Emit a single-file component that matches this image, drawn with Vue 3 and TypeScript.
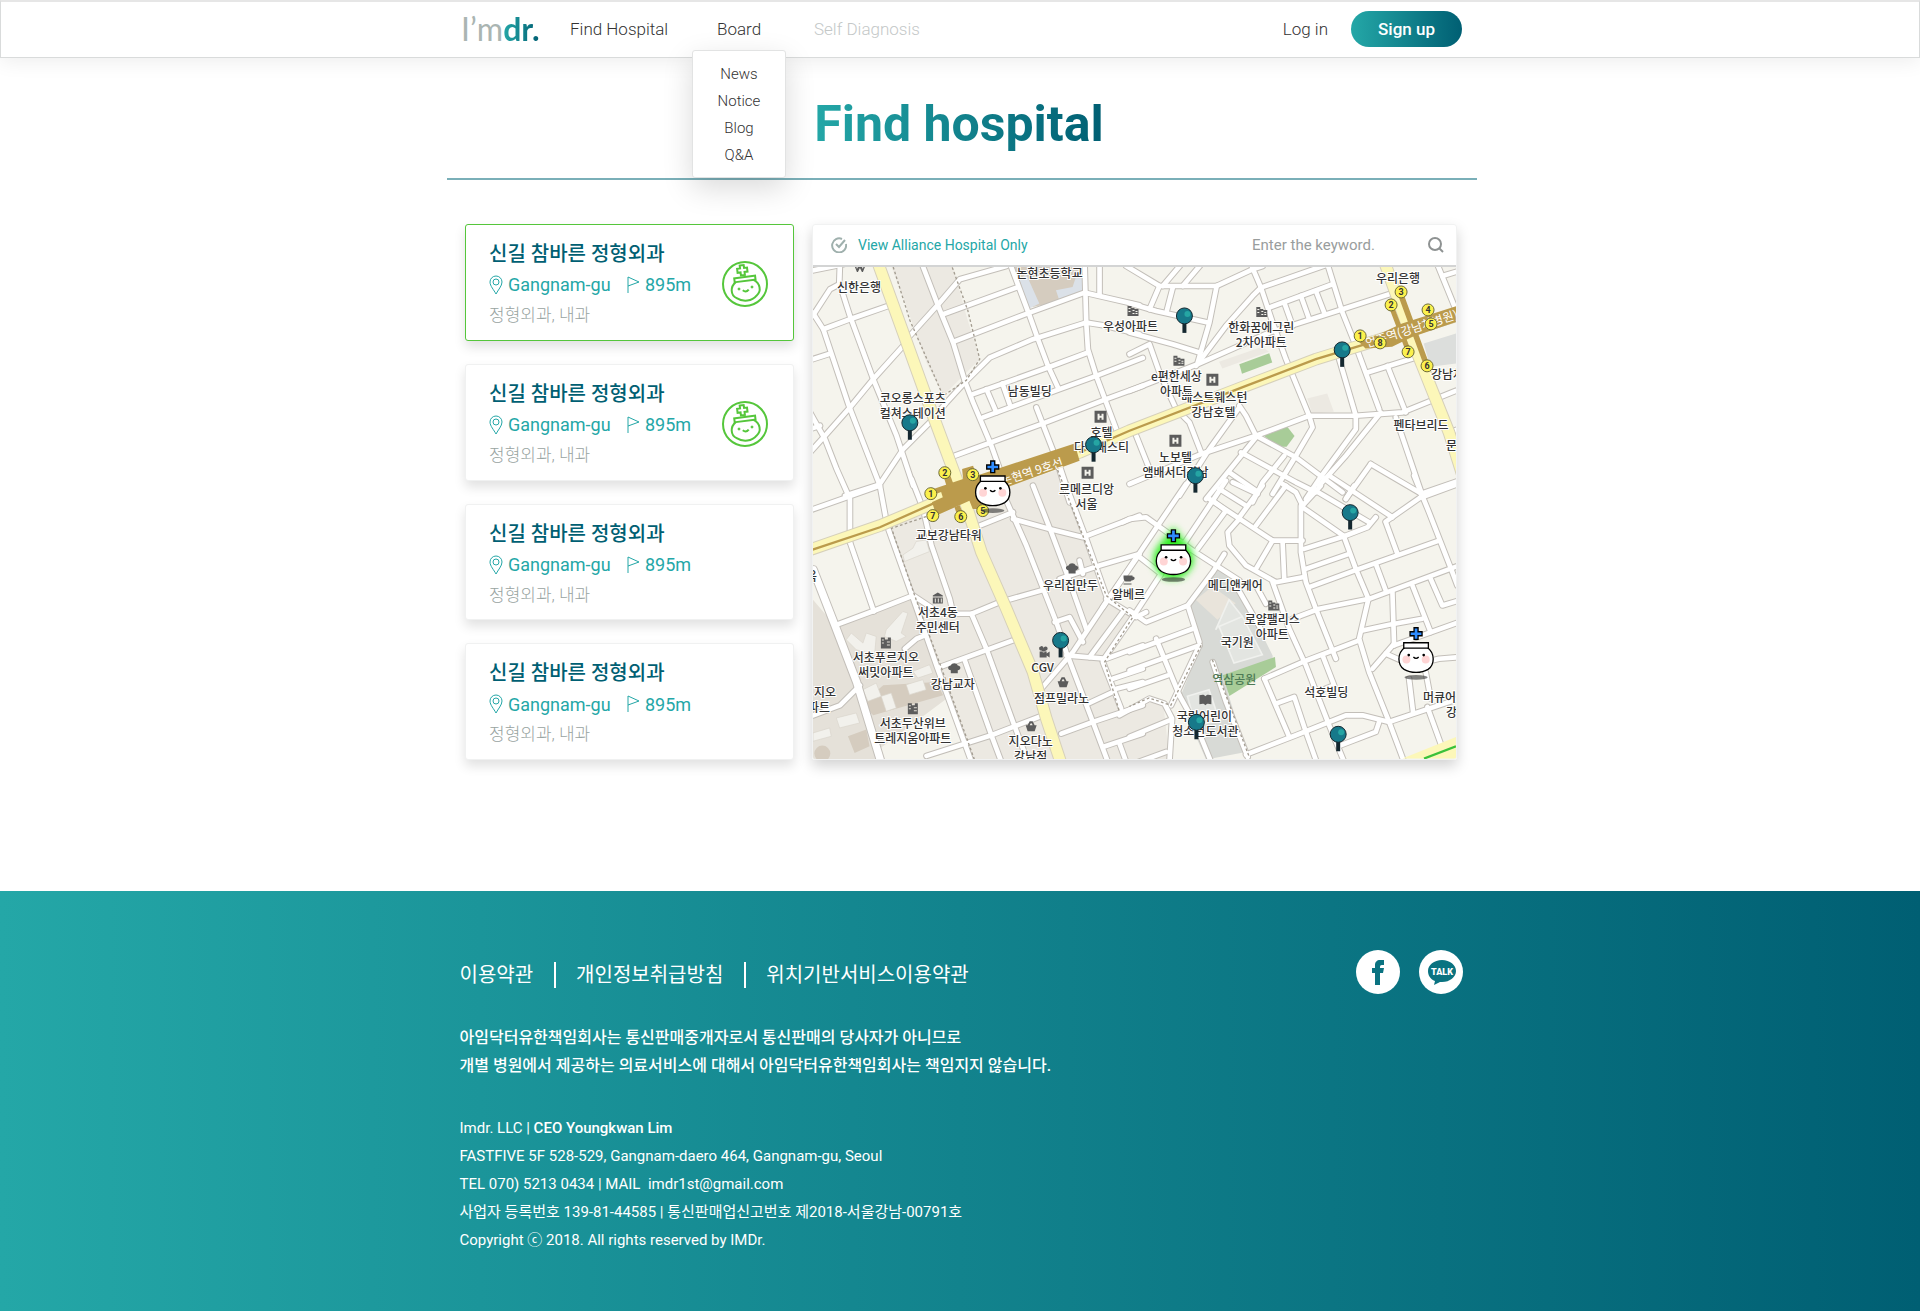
<script setup lang="ts">
import { ref } from 'vue'

interface Hospital { id: number; name: string; area: string; distance: string; depts: string; alliance: boolean; active: boolean }
interface Sheet { x: number; y: number; paths: string[] }
interface Label { x: number; y: number; text: string; anchor?: 'start' | 'end'; park?: boolean }
interface Spot { x: number; y: number }

const keyword = ref('')
const allianceOnly = ref(false)
const menu = ['News', 'Notice', 'Blog', 'Q&A']

const hospitals: Hospital[] = [1, 2, 3, 4].map((id) => ({
  id,
  name: '신길 참바른 정형외과',
  area: 'Gangnam-gu',
  distance: '895m',
  depts: '정형외과, 내과',
  alliance: id < 3,
  active: id === 1,
}))

// The street network is kept in four map sheets, each with its own origin.
const sheets: Sheet[] = [
  { x: -39, y: -153, paths: [
    'M120 140L118 200L150 300L220 490L290 660L340 810',
    'M38 290L70 340L145 565L240 810L262 930',
    'M30 165L130 145', 'M38 300L90 220L118 205', 'M70 340L150 310L265 270', 'M38 430L85 415',
    'M30 710L75 660L150 575L220 490L310 390', 'M330 360L420 260L480 190L620 150',
    'M30 590L75 670L110 760L150 850L150 980', 'M240 805L310 700L390 620L440 560L495 500L570 425L700 370L860 320L910 328L1020 355',
    'M365 140L415 270L460 380L495 495L520 560L575 690L600 760', 'M630 140L690 300L715 370L745 450L775 515',
    'M430 295L650 215', 'M460 378L690 290L855 230L1020 268', 'M855 140L860 320L865 400L890 480L950 640',
    'M900 140L900 235', 'M520 535L745 455L865 410', 'M550 605L780 520L890 480L1030 426', 'M560 520L590 590', 'M608 503L630 565',
    'M465 720L725 625L920 550L1030 510', 'M710 575L770 730L810 860', 'M135 840L235 808', 'M30 640L60 630',
  ] },
  { x: 951, y: -153, paths: [
    'M0 262L80 285L235 320', 'M-10 150L90 210L262 210L370 160L400 150', 'M90 210L60 280', 'M130 215L112 285', 'M160 210L215 145', 'M100 210L155 145',
    'M262 210L240 320L205 440', 'M200 450L290 330L370 240L395 215L610 140', 'M365 145L395 215L430 320L470 430L540 600L550 635L500 720L430 835',
    'M0 525L205 445L420 350L640 280L780 235', 'M595 145L640 290L680 390L750 580', 'M420 275L610 205', 'M465 260L490 330', 'M515 240L540 310', 'M560 225L585 290',
    'M0 350L130 385L210 410', 'M0 415L60 385L90 470L140 580L180 620L215 710', 'M20 660L60 760', 'M0 805L215 715L380 660L540 600L680 600L820 590L980 525',
    'M330 570L350 600L380 660L500 725L640 830', 'M330 575L240 700L150 840', 'M380 665L230 850', 'M715 470L860 425', 'M775 450L830 590', 'M800 605L880 840',
    'M630 430L680 600L680 640L570 790L530 850', 'M755 590L650 720L570 810', 'M725 745L650 850', 'M725 745L870 830', 'M335 710L500 800L560 830',
    'M465 720L400 800L370 860', 'M300 770L380 825', 'M875 835L990 795', 'M925 145L980 280', 'M940 180L990 165', 'M960 650L990 640',
  ] },
  { x: -39, y: 657, paths: [
    'M35 72L240 0', 'M150 170L222 378', 'M105 420L225 375L340 330L400 370', 'M260 115L335 325L410 540L515 830',
    'M335 -20L370 70L395 180L450 340L460 385L515 385L600 350L725 315', 'M515 385L560 490L640 710L685 830', 'M420 545L640 465', 'M495 525L575 750L605 830',
    'M380 812L575 750L730 690', 'M540 120L640 80', 'M600 0L680 180L770 410L800 500L880 710L925 830', 'M640 100L750 130L850 155L1020 90',
    'M700 0L755 140L800 260L860 430', 'M780 -60L800 0L860 160L920 330', 'M780 280L900 240L1020 205', 'M765 410L810 395L850 470', 'M840 225L850 265',
    'M725 610L820 500L920 350L1020 205', 'M800 510L920 520L1030 480', 'M870 515L970 380', 'M910 525L1000 395', 'M920 340L1010 395L1040 380',
    'M910 530L965 670', 'M785 745L880 710L1030 660', 'M865 655L940 620', 'M940 580L1030 550', 'M950 610L1030 590', 'M910 785L1030 745', 'M960 775L980 830',
    'M315 490L350 460L375 450', 'M40 690L120 660L180 600',
  ] },
  { x: 951, y: 657, paths: [
    'M-20 110L0 100L50 95L85 120L190 195L260 240L330 285', 'M170 -5L85 120L25 210L-80 365', 'M290 -15L160 180', 'M25 210L95 265L10 395', 'M205 190L290 75L250 45',
    'M240 40L430 165L520 165', 'M430 165L380 250', 'M460 170L465 280', 'M330 100L295 140L300 180L350 240L440 290L520 275', 'M380 120L470 0', 'M330 95L400 0',
    'M270 10L350 60', 'M310 -10L385 25', 'M515 60L515 200L530 290L560 370L620 520', 'M460 -5L500 20L520 60L575 0', 'M520 65L645 152L715 125L740 95',
    'M550 10L720 110', 'M600 -30L790 95', 'M770 108L870 38L1000 -10', 'M855 -30L900 80L970 260L985 300', 'M525 190L645 152', 'M530 250L660 205', 'M675 0L650 40',
    'M645 155L680 250L718 340L690 460L720 560L780 710L825 830', 'M540 305L690 250L930 165', 'M770 110L805 205', 'M740 235L770 315',
    'M490 400L570 370L720 340L990 240', 'M790 320L795 480', 'M700 435L780 418L880 400', 'M850 300L905 440', 'M905 280L940 360L990 345', 'M795 480L990 410',
    'M730 550L795 475', 'M770 505L850 540L930 520L990 515', 'M840 580L852 680', 'M890 560L905 640', 'M350 808L500 750L650 690L700 690L780 710L990 640',
    'M635 780L740 740L750 710', 'M895 665L935 775', 'M405 580L520 530L690 465', 'M405 580L480 755', 'M440 655L495 635L530 740L562 830', 'M430 290L480 430L530 540L600 720L645 830',
    'M580 510L615 600L590 610', 'M285 205L250 260L175 360L50 410L0 375', 'M175 360L210 470', 'M250 530L290 650L355 815', 'M320 300L400 440', 'M380 300L410 355',
    'M150 630L200 720L245 830', 'M0 500L190 430', 'M0 555L210 480', 'M80 460L150 630', 'M0 610L115 570', 'M210 480L125 660', 'M-30 690L60 640L105 655L128 700L120 830', 'M0 755L120 705', 'M0 840L110 800',
  ] },
]

const labels: Label[] = [
  { x: 46, y: 25, text: '신한은행' }, { x: 237, y: 11, text: '논현초등학교' }, { x: 318, y: 64, text: '우성아파트' },
  { x: 100, y: 136, text: '코오롱스포츠' }, { x: 100, y: 151, text: '컬쳐스테이션' }, { x: 217, y: 129, text: '남동빌딩' },
  { x: 289, y: 170, text: '호텔' }, { x: 289, y: 185, text: '다이내스티' }, { x: 274, y: 227, text: '르메르디앙' }, { x: 274, y: 242, text: '서울' },
  { x: 586, y: 16, text: '우리은행' }, { x: 449, y: 65, text: '한화꿈에그린' }, { x: 449, y: 80, text: '2차아파트' },
  { x: 402, y: 135, text: '베스트웨스턴' }, { x: 401, y: 150, text: '강남호텔' }, { x: 364, y: 114, text: 'e편한세상' }, { x: 364, y: 129, text: '아파트' },
  { x: 609, y: 163, text: '펜타브리드' }, { x: 634, y: 183, text: '문', anchor: 'start' }, { x: 363, y: 195, text: '노보텔' }, { x: 363, y: 210, text: '앰배서더강남' },
  { x: 619, y: 112, text: '강남차', anchor: 'start' }, { x: 136, y: 273, text: '교보강남타워' }, { x: 4, y: 315, text: '욱', anchor: 'end' },
  { x: 258, y: 324, text: '우리집만두' }, { x: 316, y: 333, text: '알베르' }, { x: 125, y: 351, text: '서초4동' }, { x: 125, y: 366, text: '주민센터' },
  { x: 73, y: 396, text: '서초푸르지오' }, { x: 73, y: 411, text: '써밋아파트' }, { x: 140, y: 423, text: '강남교자' }, { x: 230, y: 406, text: 'CGV' },
  { x: 249, y: 437, text: '점프밀라노' }, { x: 23, y: 431, text: '지오', anchor: 'end' }, { x: 17, y: 446, text: '파트', anchor: 'end' },
  { x: 100, y: 462, text: '서초두산위브' }, { x: 100, y: 477, text: '트레지움아파트' }, { x: 218, y: 480, text: '지오다노' }, { x: 218, y: 495, text: '강남점' },
  { x: 423, y: 324, text: '메디앤케어' }, { x: 460, y: 358, text: '로얄팰리스' }, { x: 460, y: 373, text: '아파트' }, { x: 425, y: 381, text: '국기원' },
  { x: 422, y: 418, text: '역삼공원', park: true }, { x: 392, y: 455, text: '국립어린이' }, { x: 393, y: 470, text: '청소년도서관' },
  { x: 514, y: 431, text: '석호빌딩' }, { x: 611, y: 436, text: '머큐어', anchor: 'start' }, { x: 634, y: 451, text: '강', anchor: 'start' },
]

// Glyph outlines for points of interest, drawn on a 12 × 12 grid.
const shapes: Record<string, string> = {
  building: 'M1 2H5V4H8V5H12V12H1ZM2 4V5H4V4ZM2 7V8H4V7ZM6 6V7H8V6ZM9 7V8H11V7ZM6 9V10H8V9ZM9 9V10H11V9Z',
  tower: 'M1 1H5V3H8V1H11V12H1ZM2 3V4H4V3ZM2 6V7H4V6ZM7 5V6H10V5ZM7 8V9H10V8Z',
  hotel: 'M0 0H12V12H0ZM3 3V9H5V7H7V9H9V3H7V5H5V3Z',
  museum: 'M6 1L11 4V5H1V4ZM1 6H11V12H1ZM3 7V11H4V7ZM6 7V11H7V7ZM9 7V11H10V7Z',
  chef: 'M3 11V8C-1 7 0 3 3 3C4 0 9 0 10 3C13 3 14 7 10 8V11Z',
  cup: 'M1 3H10V4C13 4 13 8 9 8L8 9H3C1 8 1 6 1 3ZM1 11H9V12H1Z',
  camera: 'M3 1A2 2 0 1 0 4 5A2 2 0 1 0 8 5A2 2 0 1 0 8 1A2 2 0 0 0 6 3A2 2 0 0 0 3 1ZM2 6H9V8L12 6V12L9 10V12H2Z',
  basket: 'M1 5H3L5 1H8L10 5H12L10 11H3ZM5 5H8L7 3H6Z',
  book: 'M0 2C3 1 5 1 6 3C7 1 9 1 12 2V11C9 10 7 10 6 12C5 10 3 10 0 11Z',
  won: 'M0 2H2L3 6L5 2H7L9 6L10 2H12V4H11L9 9H8L6 5L4 9H3L1 4H0Z',
}
const places: (Spot & { kind: string })[] = [
  { x: 320, y: 43, kind: 'building' }, { x: 449, y: 44, kind: 'building' }, { x: 366, y: 93, kind: 'building' }, { x: 461, y: 338, kind: 'building' },
  { x: 73, y: 376, kind: 'tower' }, { x: 100, y: 442, kind: 'tower' }, { x: 288, y: 150, kind: 'hotel' }, { x: 275, y: 206, kind: 'hotel' },
  { x: 400, y: 113, kind: 'hotel' }, { x: 363, y: 174, kind: 'hotel' }, { x: 125, y: 331, kind: 'museum' }, { x: 259, y: 302, kind: 'chef' },
  { x: 141, y: 402, kind: 'chef' }, { x: 316, y: 312, kind: 'cup' }, { x: 231, y: 385, kind: 'camera' }, { x: 250, y: 416, kind: 'basket' },
  { x: 218, y: 460, kind: 'basket' }, { x: 393, y: 433, kind: 'book' }, { x: 47, y: 2, kind: 'won' },
]
const exits: (Spot & { n: number })[] = [
  { x: 132, y: 206, n: 2 }, { x: 160, y: 208, n: 3 }, { x: 118, y: 227, n: 1 }, { x: 120, y: 249, n: 7 }, { x: 148, y: 250, n: 6 }, { x: 170, y: 244, n: 5 },
  { x: 589, y: 25, n: 3 }, { x: 579, y: 38, n: 2 }, { x: 616, y: 43, n: 4 }, { x: 619, y: 57, n: 5 }, { x: 548, y: 69, n: 1 }, { x: 568, y: 76, n: 8 }, { x: 596, y: 85, n: 7 }, { x: 615, y: 99, n: 6 },
]
const pins: Spot[] = [
  { x: 97, y: 156 }, { x: 281, y: 178 }, { x: 372, y: 49 }, { x: 530, y: 83 }, { x: 383, y: 209 },
  { x: 248, y: 374 }, { x: 538, y: 246 }, { x: 384, y: 456 }, { x: 526, y: 468 },
]
const mascots: (Spot & { on: boolean })[] = [
  { x: 180, y: 224, on: false }, { x: 361, y: 293, on: true }, { x: 604, y: 391, on: false },
]
</script>

<template>
  <header class="topbar">
    <div class="bar">
      <a class="logo" href="#" aria-label="I’mdr."><span class="thin">I’m</span><span class="thick">dr.</span></a>
      <nav class="nav">
        <a href="#" class="find">Find Hospital</a>
        <div class="board">
          <a href="#">Board</a>
          <ul class="menu">
            <li v-for="m in menu" :key="m"><a href="#">{{ m }}</a></li>
          </ul>
        </div>
        <a href="#" class="off">Self Diagnosis</a>
      </nav>
      <a class="login" href="#">Log in</a>
      <button class="signup" type="button">Sign up</button>
    </div>
  </header>

  <main class="page">
    <div class="heading"><h1>Find hospital</h1></div>
    <div class="columns">
      <section class="list">
        <article v-for="h in hospitals" :key="h.id" class="card" :class="{ active: h.active }">
          <div class="info">
            <h2>{{ h.name }}</h2>
            <p class="meta">
              <svg width="14" height="20" viewBox="0 0 14 20"><path d="M7 19C5 15 1 11 1 7A6 6 0 0 1 13 7C13 11 9 15 7 19Z" /><circle cx="7" cy="7" r="3" /></svg>
              <span class="area">{{ h.area }}</span>
              <svg width="14" height="20" viewBox="0 0 14 20"><path d="M2 18V2L13 7L2 11" /></svg>
              <span>{{ h.distance }}</span>
            </p>
            <p class="depts">{{ h.depts }}</p>
          </div>
          <svg v-if="h.alliance" class="badge" width="48" height="48" viewBox="0 0 48 48">
            <circle cx="24" cy="24" r="22" />
            <g transform="rotate(-7 24 24)">
              <path d="M21 5H25V8H28V12H25V15H21V12H18V8H21Z" />
              <path d="M14 17H35V21H14Z" />
              <path d="M15 21C9 25 8 33 14 37C20 42 29 42 34 37C40 33 39 25 33 21" />
              <path d="M21 30Q24 33 27 30" />
            </g>
            <circle class="dot" cx="18" cy="29" r="1" /><circle class="dot" cx="31" cy="27" r="1" />
          </svg>
        </article>
      </section>

      <section class="mapbox">
        <form class="maphead" @submit.prevent>
          <label class="only">
            <input v-model="allianceOnly" type="checkbox">
            <svg width="16" height="16" viewBox="0 0 16 16"><path d="M15 7A7 7 0 1 1 11 2" /><path d="M5 7L8 10L14 3" /></svg>
            <span>View Alliance Hospital Only</span>
          </label>
          <input v-model="keyword" class="keyword" type="text" aria-label="Keyword" placeholder="Enter the keyword.">
          <button class="search" type="submit" aria-label="Search">
            <svg width="16" height="16" viewBox="0 0 16 16"><circle cx="7" cy="7" r="6" /><path d="M11 11L15 15" /></svg>
          </button>
        </form>

        <svg class="map" viewBox="0 0 644 493" preserveAspectRatio="xMidYMid slice" role="img" aria-label="Hospital map">
          <defs>
            <filter id="glow" x="-50%" y="-50%" width="200%" height="200%"><feGaussianBlur stdDeviation="11" /></filter>
          </defs>
          <g transform="scale(0.33333)">
            <rect width="1932" height="1480" fill="#f5f4ed" />
            <!-- districts -->
            <path fill="#ece9e2" d="M236 0H421L461 147L501 277L391 387L341 287L291 147Z" />
            <path fill="#ece9e2" d="M221 777L361 737L741 607L771 657L881 987L961 1052L876 1187L921 1337L1051 1297L1071 1480H481L371 1202Z" />
            <path fill="#e5e1d9" d="M0 1000L66 1077L296 992L371 1197L401 1297L201 1447L211 1480H0Z" />
            <path fill="#d5ccbf" d="M596 0H800V90L660 120Z" />
            <path fill="#dbe1e8" d="M621 40L640 20L680 110L650 125ZM800 0H815V70L740 100L730 70L780 60Z" />
            <path fill="#d5ccbf" d="M146 1312L211 1257L371 1247L391 1287L181 1347ZM105 1410L160 1390L170 1440L125 1460Z" />
            <g fill="#f2f1ec" stroke="#d9d4cb" stroke-width="2">
              <path d="M100 1120L115 1100L150 1130L160 1100L190 1110L185 1165L130 1150Z" />
              <path d="M220 1090L270 1035L285 1040L265 1100L280 1110L250 1125L215 1110Z" />
              <path d="M150 1270L190 1250L205 1290L165 1305Z" /><path d="M205 1290L235 1280L250 1325L220 1335Z" />
              <path d="M300 1215L350 1195L360 1220L315 1235Z" /><path d="M280 1255L330 1240L340 1270L290 1285Z" />
              <path d="M70 1355L130 1340L140 1370L80 1385Z" /><path d="M0 1400L50 1385L55 1410L0 1425Z" />
              <path d="M270 865L300 845L310 825L340 820L350 855L275 885Z" />
            </g>
            <circle cx="28" cy="1462" r="24" fill="#d5ccbf" />
            <path fill="#d8dad6" d="M1211 897L1281 967L1381 1167L1381 1197L1246 1277L1301 1457L1181 1480L1101 1297L1166 1137L1131 1027Z" />
            <path fill="#e9e4db" d="M1150 1000L1200 960L1270 1010L1215 1060Z" />
            <path fill="#e3e5e1" stroke="#f0f1ee" stroke-width="5" d="M1220 1080L1290 1050L1350 1165L1265 1190ZM1210 1090L1250 1000L1290 1050M1125 1290L1190 1270L1220 1360L1150 1380Z" />
            <path fill="#a8cc98" d="M1231 1227L1388 1172L1391 1202L1251 1289Z" />
            <path fill="#a8cc98" d="M1281 292L1371 259L1380 287L1289 321Z" />
            <path fill="#a8cc98" d="M1355 507L1425 480L1447 508L1423 540L1395 540Z" />
            <path fill="#ece9e2" d="M1485 395L1545 380L1565 435L1500 440ZM1220 285L1350 240L1370 255L1230 305Z" />
            <path fill="#dcdedc" d="M1835 230L1932 200V290L1855 300Z" />
            <!-- streets: edge, then surface -->
            <g class="edge">
              <g v-for="(s, i) in sheets" :key="i" :transform="`translate(${s.x} ${s.y})`"><path v-for="p in s.paths" :key="p" :d="p" /></g>
              <path class="wide" d="M1 910L66 1077L131 1247L205 1490" />
            </g>
            <g class="surface">
              <g v-for="(s, i) in sheets" :key="i" :transform="`translate(${s.x} ${s.y})`"><path v-for="p in s.paths" :key="p" :d="p" /></g>
              <path class="wide" d="M1 910L66 1077L131 1247L205 1490" />
            </g>
            <!-- administrative borders -->
            <g class="border">
              <path d="M241 0L291 160L391 387L461 340L501 277L465 130L418 0" />
              <path d="M340 750L236 785L310 1000L385 1202L485 1480" />
              <path d="M735 610L831 860L881 987L961 1052L876 1187L921 1337" />
              <path d="M1166 1137L1075 1317L1010 1295L951 1320M1200 1180L1310 1470" />
            </g>
            <!-- avenues -->
            <g class="avenue">
              <path class="rim" d="M196 -10L271 197L361 447L461 717L506 857L581 1027L661 1217L701 1357L745 1490" />
              <path class="rim" d="M1719 -10L1811 247L1911 497L1950 620" />
              <path class="rim" d="M-10 850L201 777L381 702L801 557L951 492L1301 357L1511 277L1932 147" />
              <path d="M196 -10L271 197L361 447L461 717L506 857L581 1027L661 1217L701 1357L745 1490" />
              <path d="M1719 -10L1811 247L1911 497L1950 620" />
              <path d="M-10 850L201 777L381 702L801 557L951 492L1301 357L1511 277L1932 147" />
              <path d="M1932 1412L1771 1477H1932Z" fill="#fcf7b9" stroke="none" />
            </g>
            <path class="metro" d="M-10 852L201 782L381 702M801 557L951 492L1301 357L1511 277L1700 220" />
            <path d="M1836 1477L1932 1440" stroke="#3ac13a" stroke-width="7" />
            <g fill="#bb9b4c">
              <path d="M346 672L451 637L448 607L481 597L491 627L786 530L801 582L501 692L511 727H480L470 702L371 747Z" />
              <path d="M391 625L410 620L425 660L405 670ZM425 722L440 715L455 750H435Z" />
              <path d="M1641 225L1715 195L1770 170L1932 118V165L1800 210L1740 240L1660 245Z" />
              <path d="M1760 90L1776 85L1853 295L1837 300ZM1732 125L1746 120L1792 240L1778 245Z" />
            </g>
            <path d="M346 690L385 676L390 692L350 710Z" fill="#fcf7b9" />
          </g>

          <text class="station" transform="translate(190 219) rotate(-18)">논현역 9호선</text>
          <text class="station" transform="translate(555 81) rotate(-18)">언주역(강남차병원)</text>
          <g v-for="(p, i) in places" :key="'p' + i" :transform="`translate(${p.x - 6} ${p.y - 6})`">
            <path class="poi" :d="shapes[p.kind]" />
          </g>
          <text v-for="(l, i) in labels" :key="'l' + i" class="label" :class="[l.anchor, { park: l.park }]" :x="l.x" :y="l.y">{{ l.text }}</text>
          <g v-for="(e, i) in exits" :key="'e' + i" :transform="`translate(${e.x} ${e.y})`">
            <circle r="6" fill="#fbf04d" stroke="#6d6a35" />
            <text class="exit" y="3">{{ e.n }}</text>
          </g>
          <g v-for="(p, i) in pins" :key="'n' + i" :transform="`translate(${p.x} ${p.y})`">
            <path d="M0 6V17" stroke="#14272f" stroke-width="4" />
            <circle r="8" fill="#17798a" stroke="#14272f" />
            <circle cx="3" cy="-2" r="3" fill="#25a5a3" />
          </g>
          <g v-for="(m, i) in mascots" :key="'m' + i" :transform="`translate(${m.x} ${m.y}) scale(0.33333)`">
            <path v-if="m.on" d="M0 -90L32 -50Q62 -20 54 14Q29 58 0 54Q-34 58 -54 14Q-62 -20 -32 -50Z" fill="#39f02c" stroke="#39f02c" stroke-width="10" filter="url(#glow)" />
            <ellipse cy="60" rx="35" ry="7" fill="#333" opacity="0.6" />
            <path d="M-34 -30C-58 -12 -56 22 -36 36C-16 48 16 48 36 36C56 22 58 -12 34 -30Z" fill="#fff" stroke="#000" stroke-width="4" />
            <path d="M-37 -44H37V-28H-37Z" fill="#fff" stroke="#000" stroke-width="4" />
            <path d="M-6 -89H6V-77H18V-65H6V-54H-6V-65H-18V-77H-6Z" fill="#2f8cff" stroke="#000" stroke-width="4" />
            <circle cx="-29" cy="6" r="12" fill="#ffd5d5" /><circle cx="29" cy="6" r="12" fill="#ffd5d5" />
            <circle cx="-22" cy="-7" r="4" /><circle cx="23" cy="-7" r="4" />
            <path d="M-8 -1Q0 7 8 -1" fill="none" stroke="#000" stroke-width="4" />
          </g>
        </svg>
      </section>
    </div>
  </main>

  <footer class="footer">
    <div class="foot">
      <div class="footrow">
        <ul class="terms">
          <li><a href="#">이용약관</a></li>
          <li><a href="#">개인정보취급방침</a></li>
          <li><a href="#">위치기반서비스이용약관</a></li>
        </ul>
        <div class="social">
          <a href="#" aria-label="Facebook">
            <svg width="44" height="44" viewBox="0 0 44 44"><circle cx="22" cy="22" r="22" fill="#fff" /><path fill="#0a7381" d="M19 35V23H16V18H19V15C19 12 21 10 24 10H28V15H26C24 15 24 16 24 18H28L27 23H24V35Z" /></svg>
          </a>
          <a href="#" aria-label="KakaoTalk">
            <svg width="44" height="44" viewBox="0 0 44 44"><circle cx="22" cy="22" r="22" fill="#fff" /><path fill="#0a7381" d="M23 10C31 10 37 15 37 21C37 27 31 32 23 32H21L15 35L16 31C11 29 9 25 9 21C9 15 15 10 23 10Z" /><text x="23" y="25" class="talk">TALK</text></svg>
          </a>
        </div>
      </div>
      <p class="notice">아임닥터유한책임회사는 통신판매중개자로서 통신판매의 당사자가 아니므로<br>개별 병원에서 제공하는 의료서비스에 대해서 아임닥터유한책임회사는 책임지지 않습니다.</p>
      <address class="company">
        Imdr. LLC | <b>CEO Youngkwan Lim</b><br>
        FASTFIVE 5F 528-529, Gangnam-daero 464, Gangnam-gu, Seoul<br>
        TEL 070) 5213 0434 | MAIL&nbsp; imdr1st@gmail.com<br>
        사업자 등록번호 139-81-44585 | 통신판매업신고번호 제2018-서울강남-00791호<br>
        Copyright ⓒ 2018. All rights reserved by IMDr.
      </address>
    </div>
  </footer>
</template>

<style>
body {
  margin: 0;
  background: #fff;
  font-family: Roboto, "Noto Sans CJK KR", sans-serif;
}
</style>

<style scoped>
a { color: inherit; text-decoration: none; }
h1, h2, p, ul { margin: 0; padding: 0; }
ul { list-style: none; }
button { font: inherit; cursor: pointer; }

.topbar {
  position: relative;
  z-index: 2;
  box-sizing: border-box;
  height: 58px;
  border: 1px solid #d9dbdb;
  border-top: 2px solid #e6e6e6;
  background: #fff;
  box-shadow: 0 4px 20px rgba(0, 0, 0, 0.07);
}
.bar {
  display: flex;
  align-items: center;
  box-sizing: border-box;
  max-width: 1004px;
  height: 54px;
  margin: 0 auto;
  padding-left: 3px;
  font-size: 17px;
  font-weight: 300;
  color: #333;
}
.logo { display: flex; width: 109px; font-family: Lato, sans-serif; font-size: 32px; line-height: 40px; }
.logo .thin { font-weight: 400; color: #aab5b2; }
.logo .thick {
  font-weight: 700;
  background: linear-gradient(90deg, #24a7a7, #005f73);
  background-clip: text;
  color: transparent;
}
.nav { display: flex; flex: 1; }
.find { width: 147px; }
.board { position: relative; width: 97px; }
.off { color: #c4c8c8; }
.menu {
  position: absolute;
  top: 31px;
  left: -25px;
  box-sizing: border-box;
  width: 94px;
  padding: 10px 0 8px;
  border: 1px solid #e2e3e3;
  border-radius: 3px;
  background: #fff;
  box-shadow: 0 10px 30px rgba(0, 0, 0, 0.15);
  text-align: center;
  font-size: 15px;
  line-height: 27px;
}
.login { margin-right: 23px; }
.signup {
  width: 111px;
  height: 36px;
  padding: 0;
  border: 0;
  border-radius: 18px;
  background: linear-gradient(90deg, #24a7a7, #005f73);
  color: #fff;
  font-weight: 500;
}

.page { max-width: 1030px; margin: 0 auto; padding: 0 0 131px 4px; }
.heading {
  display: flex;
  justify-content: center;
  box-sizing: border-box;
  height: 122px;
  padding: 36px 6px 0 0;
  border-bottom: 2px solid #7aafb8;
}
h1 {
  font-size: 50px;
  font-weight: 700;
  line-height: 60px;
  background: linear-gradient(90deg, #24a7a7, #005f73);
  background-clip: text;
  color: transparent;
}
.columns { display: flex; gap: 18px; padding: 44px 20px 0 18px; }
.list { display: flex; flex-direction: column; gap: 23px; width: 329px; }
.card {
  display: flex;
  flex: 1;
  align-items: center;
  justify-content: space-between;
  box-sizing: border-box;
  padding: 4px 24px 0 23px;
  border: 1px solid #f0f1f1;
  border-radius: 3px;
  background: #fff;
  box-shadow: 0 6px 12px rgba(0, 0, 0, 0.12);
}
.card.active { border-color: #55c63b; }
h2 { font-size: 20px; font-weight: 500; line-height: 30px; color: #005f73; }
.meta { display: flex; align-items: center; height: 32px; font-size: 18px; color: #24a7a7; }
.meta svg { fill: none; stroke: #24a7a7; }
.area { width: 104px; margin-left: 5px; margin-right: 14px; }
.meta span:last-child { margin-left: 5px; }
.depts { font-size: 17px; font-weight: 300; line-height: 29px; color: #98a3a1; }
.badge { fill: none; stroke: #55c63b; stroke-width: 2; }
.badge .dot { fill: #55c63b; stroke-width: 1; }

.mapbox {
  flex: 1;
  box-sizing: border-box;
  border: 1px solid #f1f2f2;
  border-radius: 3px;
  overflow: hidden;
  box-shadow: 0 6px 14px rgba(0, 0, 0, 0.18);
}
.maphead {
  display: flex;
  align-items: center;
  box-sizing: border-box;
  height: 42px;
  padding: 0 12px 0 18px;
  border-bottom: 2px solid #d3d4d4;
  font-size: 14px;
}
.only { position: relative; display: flex; flex: 1; align-items: center; gap: 11px; color: #24a7a7; }
.only input { position: absolute; width: 16px; height: 16px; margin: 0; opacity: 0; }
.only svg { fill: none; stroke: #9fb0ad; stroke-width: 2; }
.keyword { width: 176px; padding: 0; border: 0; outline: 0; background: none; font-family: inherit; font-size: 15px; color: #444; }
.keyword::placeholder { color: #999d9d; opacity: 1; }
.search { display: flex; padding: 0; border: 0; background: none; }
.search svg { fill: none; stroke: #8e9292; stroke-width: 2; }
.map { display: block; width: 100%; }

.edge { fill: none; stroke: #c3bfb9; stroke-width: 20; stroke-linejoin: round; stroke-linecap: round; }
.surface { fill: none; stroke: #fff; stroke-width: 14; stroke-linejoin: round; stroke-linecap: round; }
.edge .wide { stroke-width: 28; }
.surface .wide { stroke-width: 22; }
.border { fill: none; stroke: #a39c90; stroke-width: 4; stroke-dasharray: 8 7; }
.avenue { fill: none; stroke: #fcf7b9; stroke-width: 32; stroke-linejoin: round; }
.avenue .rim { stroke: #d6d0ba; stroke-width: 38; }
.metro { fill: none; stroke: #bb9b4c; stroke-width: 7; }
.poi { fill: #5c5c5c; fill-rule: evenodd; }
.label {
  font-family: "Noto Sans CJK KR", sans-serif;
  font-size: 12px;
  font-weight: 500;
  fill: #333;
  stroke: #fff;
  stroke-width: 2px;
  paint-order: stroke;
  text-anchor: middle;
}
.label.start { text-anchor: start; }
.label.end { text-anchor: end; }
.label.park { fill: #4d7a55; stroke: none; }
.station { font-family: "Noto Sans CJK KR", sans-serif; font-size: 12px; fill: #fff; }
.exit { font-size: 9px; font-weight: 700; fill: #333; text-anchor: middle; }

.footer { background: linear-gradient(90deg, #24a7a7, #005f73); color: #fff; }
.foot { max-width: 1003px; margin: 0 auto; padding: 59px 0 60px 2px; }
.footrow { display: flex; justify-content: space-between; }
.terms { display: flex; align-items: center; padding-top: 5px; font-size: 20px; font-weight: 400; line-height: 26px; }
.terms li + li { margin-left: 21px; padding-left: 20px; border-left: 2px solid #fff; }
.social { display: flex; gap: 19px; }
.social svg { display: block; }
.talk { font-size: 9px; font-weight: 900; fill: #fff; text-anchor: middle; }
.notice { margin-top: 30px; font-size: 16px; font-weight: 500; line-height: 28px; }
.company { margin-top: 34px; font-size: 15px; font-style: normal; line-height: 28px; }
.company b { font-weight: 500; }
</style>
